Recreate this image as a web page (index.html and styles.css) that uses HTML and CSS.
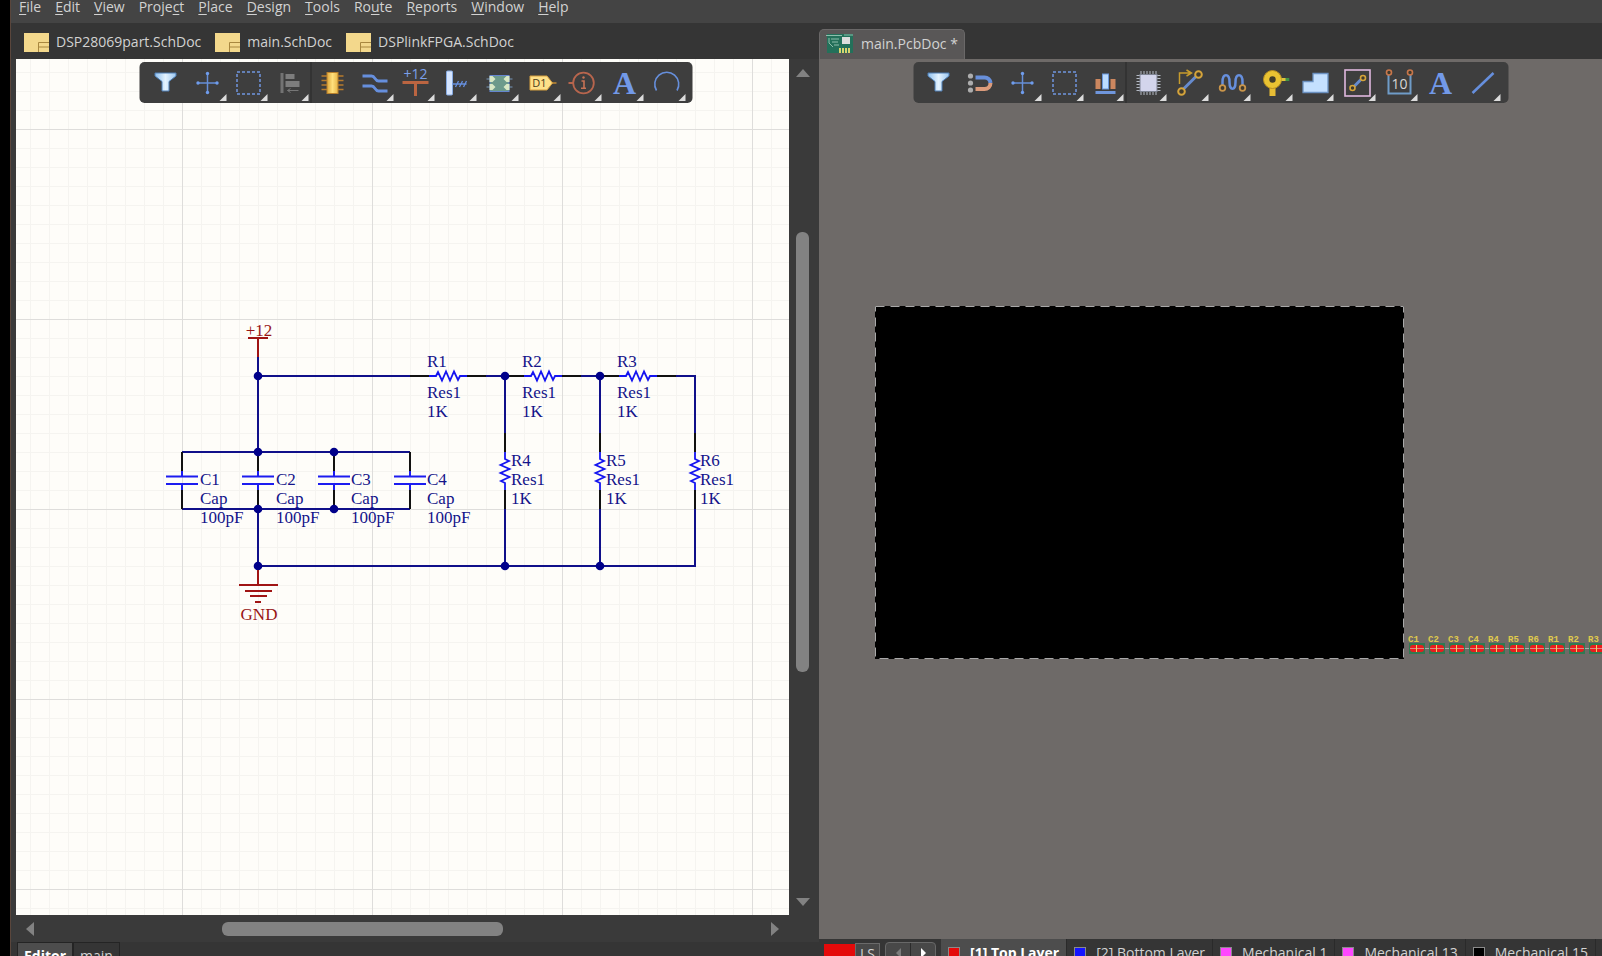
FILE: index.html
```html
<!DOCTYPE html>
<html lang="en">
<head>
<meta charset="utf-8">
<title>main.PcbDoc</title>
<link rel="stylesheet" href="styles.css">
</head>
<body>
<svg class="defs" aria-hidden="true">
  <defs>
    <linearGradient id="ice" x1="0" x2="1"><stop offset="0" stop-color="#8fc0ee"/><stop offset=".5" stop-color="#e4f3ff"/><stop offset="1" stop-color="#9cc6ee"/></linearGradient>
    <linearGradient id="gold" x1="0" x2="1"><stop offset="0" stop-color="#e0a93c"/><stop offset=".5" stop-color="#ffe07c"/><stop offset="1" stop-color="#e8b648"/></linearGradient>
    <symbol id="i-funnel" viewBox="0 0 32 32"><path d="M5.500 6h21v3l-7 5.500V24h-7v-9.500l-7-5.500z" fill="url(#ice)" stroke="#4f7fb5"/></symbol>
    <symbol id="i-move" viewBox="0 0 32 32"><path d="M16 6v20M6 16h20" stroke="#668fd8" stroke-width="1.500"/><g fill="#6f9cec"><circle cx="16" cy="6.500" r="1.700"/><circle cx="16" cy="25.500" r="1.700"/><circle cx="6.500" cy="16" r="1.700"/><circle cx="25.500" cy="16" r="1.700"/></g></symbol>
    <symbol id="i-select" viewBox="0 0 32 32"><rect x="4.500" y="5" width="23" height="22" fill="none" stroke="#7096e0" stroke-width="1.500" stroke-dasharray="3 2"/></symbol>
    <symbol id="i-align" viewBox="0 0 32 32"><path d="M6 6h3v20H6z" fill="#737373"/><path d="M11 7h9v5h-9zM11 14h14v6H11z" fill="#7d7d7d"/><path d="M24 23.500H13m3-2-3 2 3 2" stroke="#777" fill="none"/></symbol>
    <symbol id="i-part" viewBox="0 0 32 32"><path d="M5 9h22M5 13.500h22M5 18h22M5 22.500h22" stroke="#b77b2d" stroke-width="1.500"/><rect x="10.500" y="5.500" width="11" height="21" fill="url(#gold)" stroke="#b8802c"/></symbol>
    <symbol id="i-wire" viewBox="0 0 32 32"><path d="M4 9h9q2 0 3.500 2.500T20 14h9M4 19h9q2 0 3.500 2.500T20 24h9" fill="none" stroke="#668fdd" stroke-width="2.800"/></symbol>
    <symbol id="i-power" viewBox="0 0 32 32"><path d="M3 15.500h26M16 15.500V29" stroke="#bb6541" stroke-width="3"/><text x="16" y="12" text-anchor="middle" class="t-power">+12</text></symbol>
    <symbol id="i-bus" viewBox="0 0 32 32"><rect x="5" y="4" width="6" height="24" rx="1" fill="#d5e5ff" stroke="#86aae2"/><path d="M11 17h14M14 20l3-6M18 20l3-6M22 20l3-6" stroke="#668fdd" stroke-width="1.300"/></symbol>
    <symbol id="i-sheet" viewBox="0 0 32 32"><path d="M3 12h26M3 20h26" stroke="#7595b9"/><rect x="6.500" y="8.500" width="19" height="16" fill="#6d9a8b" stroke="#6586cf"/><path d="M6 9h3l3 3-3 3H6zM6 17h3l3 3-3 3H6zM26 9h-3l-3 3 3 3h3zM26 17h-3l-3 3 3 3h3z" fill="#d9e8c5"/></symbol>
    <symbol id="i-port" viewBox="0 0 32 32"><path d="M25 16h6" stroke="#c38a33" stroke-width="1.500"/><path d="M4.500 9h17l5.500 7-5.500 7h-17z" fill="#ffe089" stroke="#d59f3f"/><text x="14" y="20" text-anchor="middle" class="t-port">D1</text></symbol>
    <symbol id="i-info" viewBox="0 0 32 32"><path d="M1 16h5" stroke="#b7654d" stroke-width="2"/><circle cx="16" cy="16" r="10.300" fill="none" stroke="#b7654d" stroke-width="1.800"/><path d="M14 14h2.500v7M13.500 21.200h5" fill="none" stroke="#c87355" stroke-width="1.600"/><circle cx="16" cy="10.500" r="1.200" fill="#c87355"/></symbol>
    <symbol id="i-text" viewBox="0 0 32 32"><text x="16" y="27" text-anchor="middle" class="t-letter">A</text></symbol>
    <symbol id="i-arc" viewBox="0 0 32 32"><path d="M6 23.500A12 12 0 1 1 26.500 23.500" fill="none" stroke="#668fdc" stroke-width="1.600"/></symbol>
    <symbol id="i-magnet" viewBox="0 0 32 32"><g fill="#adadad"><circle cx="6" cy="9" r="2.600"/><circle cx="6" cy="16" r="2.600"/><circle cx="6" cy="23" r="2.600"/></g><path d="M11 10.500h9a6 6 0 0 1 6 5.500" fill="none" stroke="#688fda" stroke-width="4"/><path d="M11 22h9a6 6 0 0 0 6-6" fill="none" stroke="#db9b7b" stroke-width="4"/></symbol>
    <symbol id="i-stack" viewBox="0 0 32 32"><path d="M6 12h5v10H6zM21 12h5v10h-5z" fill="#cc875f"/><rect x="13" y="7" width="6" height="15" fill="#bcdcff" stroke="#6a97dc"/><path d="M6 24h20v3H6z" fill="#6f96dc"/></symbol>
    <symbol id="i-chip" viewBox="0 0 32 32"><path d="M9.500 4v24M12.500 4v24M15.500 4v24M18.500 4v24M21.500 4v24M24.500 4v24M5 8.500h24M5 11.500h24M5 14.500h24M5 17.500h24M5 20.500h24M5 23.500h24" stroke="#b4bac4"/><rect x="8.500" y="7.500" width="17" height="17" fill="#d3d5ec" stroke="#7e8493"/></symbol>
    <symbol id="i-route" viewBox="0 0 32 32"><path d="M8 24 24 8" stroke="#668bce" stroke-width="3"/><path d="M6 17V6h11m-4-3 5 3-5 3" fill="none" stroke="#c79c2d" stroke-width="1.500"/><g fill="#403a2c" stroke="#d5a43b" stroke-width="2"><circle cx="8" cy="24.500" r="3.300"/><circle cx="25" cy="7.500" r="3.300"/></g></symbol>
    <symbol id="i-wave" viewBox="0 0 32 32"><path d="M7 19v-4c0-9 7-9 7 0s6 9 6 0 7-9 7 0v4" fill="none" stroke="#668fdd" stroke-width="2.500"/><g fill="#403a2c" stroke="#c8944a" stroke-width="1.800"><circle cx="7" cy="21" r="2.800"/><circle cx="27" cy="21" r="2.800"/></g></symbol>
    <symbol id="i-via" viewBox="0 0 32 32"><path d="M22 12.500h10" stroke="#419247" stroke-width="3"/><path d="M12 20h6v9h-6z" fill="#e7bd35"/><circle cx="15" cy="12.500" r="9" fill="#eac332" stroke="#b99022"/><circle cx="15" cy="12.500" r="3.200" fill="#423d29"/><path d="M24 12.500h4" stroke="#e0c33a" stroke-width="3"/></symbol>
    <symbol id="i-poly" viewBox="0 0 32 32"><path d="M4.500 25.500v-11h10v-8h15v19z" fill="#c4e0ff" stroke="#6b91c1" stroke-width="1.300"/></symbol>
    <symbol id="i-room" viewBox="0 0 32 32"><rect x="4.500" y="3" width="25" height="26" fill="none" stroke="#e0b8df" stroke-width="1.600"/><path d="m12 21 10-10" stroke="#668bce" stroke-width="3"/><g fill="#403a2c" stroke="#d5a43b" stroke-width="1.600"><circle cx="12" cy="21" r="2.500"/><circle cx="22.500" cy="11" r="2.500"/></g></symbol>
    <symbol id="i-dim" viewBox="0 0 32 32"><path d="M6 8v18.500h22V8" fill="none" stroke="#6f9cc8" stroke-width="2"/><g fill="#403a2c" stroke="#c8764a" stroke-width="1.600"><circle cx="6.500" cy="5.500" r="2.500"/><circle cx="27.500" cy="5.500" r="2.500"/></g><text x="17" y="22" text-anchor="middle" class="t-dim">10</text></symbol>
    <symbol id="i-line" viewBox="0 0 32 32"><path d="M6 26 27 6" stroke="#668fdd" stroke-width="2.500"/></symbol>
    <symbol id="i-doc" viewBox="0 0 25 19"><path d="M0 0h25v19H0z" fill="#f3d88c"/><path d="M14.500 19V9.500H25M14.500 14H25" fill="none" stroke="#a8873f"/></symbol>
    <symbol id="i-pcb" viewBox="0 0 28 20"><path d="M1 0h26v19H1z" fill="#24705a"/><path d="M0 1.500h16M3 4v5l4 4M5 5h8M6 8h6M8 11h5M18 1h9" stroke="#8dbeac" fill="none"/><path d="M16 3h8v7h-8z" fill="#ddd"/><path d="M14 14v5M17 14v5M20 14v5M23 14v5" stroke="#d9d36f" stroke-width="2"/></symbol>
    <symbol id="zig" viewBox="0 0 38 14" overflow="visible"><path d="M0 7h7l2-4 4 8.500 4-9 4 9 4-9 4 8.500 2-4h7" fill="none" stroke="#1414f0" stroke-width="1.800"/></symbol>
  </defs>
</svg>

<div class="app">
  <nav class="menu" aria-label="Main menu">
    <button><u>F</u>ile</button><button><u>E</u>dit</button><button><u>V</u>iew</button><button>Proje<u>c</u>t</button><button><u>P</u>lace</button><button><u>D</u>esign</button><button><u>T</u>ools</button><button>Ro<u>u</u>te</button><button><u>R</u>eports</button><button><u>W</u>indow</button><button><u>H</u>elp</button>
  </nav>
  <main class="panes">
    <section class="pane sch" aria-label="Schematic">
      <div class="docs">
        <button class="doc"><svg class="doc-icon"><use href="#i-doc"/></svg>DSP28069part.SchDoc</button>
        <button class="doc"><svg class="doc-icon"><use href="#i-doc"/></svg>main.SchDoc</button>
        <button class="doc"><svg class="doc-icon"><use href="#i-doc"/></svg>DSPlinkFPGA.SchDoc</button>
      </div>
      <div class="work">
        <div class="sheet">
          <svg class="drawing" role="img" aria-label="Circuit schematic">
            <defs>
              <pattern id="minor" x="14" y="13" width="19" height="19" patternUnits="userSpaceOnUse"><path d="M.5 0v19M0 .5h19" stroke="#f5f4f0"/></pattern>
              <pattern id="major" x="166" y="70" width="190" height="190" patternUnits="userSpaceOnUse"><path d="M.5 0v190M0 .5h190" stroke="#dedddb"/></pattern>
            </defs>
            <rect width="100%" height="100%" fill="url(#minor)"/>
            <rect width="100%" height="100%" fill="url(#major)"/>
            <g class="wire">
              <path d="M242 298V507M242 317H679V507H242M166 393H394M166 450H394M489 317V507M584 317V507"/>
            </g>
            <g class="pin">
              <path d="M166 393v19M166 431v19M242 393v19M242 431v19M318 393v19M318 431v19M394 393v19M394 431v19"/>
              <path d="M394 317h19M451 317h19M489 317h19M546 317h19M584 317h19M641 317h19"/>
              <path d="M489 374v19M489 431v19M584 374v19M584 431v19M679 374v19M679 431v19"/>
            </g>
            <g class="erase"><path d="M413 317h38M508 317h38M603 317h38M489 393v38M584 393v38M679 393v38M242 418v7"/></g>
            <g class="cap">
              <path d="M150 417.500h32M150 425h32M166 412v5M166 425v6"/>
              <path d="M226 417.500h32M226 425h32M242 412v5M242 425v6"/>
              <path d="M302 417.500h32M302 425h32M318 412v5M318 425v6"/>
              <path d="M378 417.500h32M378 425h32M394 412v5M394 425v6"/>
            </g>
            <use href="#zig" x="413" y="310" width="38" height="14"/>
            <use href="#zig" x="508" y="310" width="38" height="14"/>
            <use href="#zig" x="603" y="310" width="38" height="14"/>
            <use href="#zig" width="38" height="14" transform="translate(496 393) rotate(90)"/>
            <use href="#zig" width="38" height="14" transform="translate(591 393) rotate(90)"/>
            <use href="#zig" width="38" height="14" transform="translate(686 393) rotate(90)"/>
            <g class="node"><circle cx="242" cy="317" r="4.300"/><circle cx="242" cy="393" r="4.300"/><circle cx="318" cy="393" r="4.300"/><circle cx="242" cy="450" r="4.300"/><circle cx="318" cy="450" r="4.300"/><circle cx="242" cy="507" r="4.300"/><circle cx="489" cy="317" r="4.300"/><circle cx="584" cy="317" r="4.300"/><circle cx="489" cy="507" r="4.300"/><circle cx="584" cy="507" r="4.300"/></g>
            <g class="rail"><path d="M232 279h20M242 279v19M242 511v15M223 526h39M229 532h27M234 537h17M239 543h6"/></g>
            <g class="rail-label"><text x="243" y="277">+12</text><text x="243" y="561">GND</text></g>
            <g class="label">
              <text x="411" y="308">R1</text><text x="411" y="339">Res1</text><text x="411" y="358">1K</text>
              <text x="506" y="308">R2</text><text x="506" y="339">Res1</text><text x="506" y="358">1K</text>
              <text x="601" y="308">R3</text><text x="601" y="339">Res1</text><text x="601" y="358">1K</text>
              <text x="495" y="407">R4</text><text x="495" y="426">Res1</text><text x="495" y="445">1K</text>
              <text x="590" y="407">R5</text><text x="590" y="426">Res1</text><text x="590" y="445">1K</text>
              <text x="684" y="407">R6</text><text x="684" y="426">Res1</text><text x="684" y="445">1K</text>
              <text x="184" y="426">C1</text><text x="184" y="445">Cap</text><text x="184" y="464">100pF</text>
              <text x="260" y="426">C2</text><text x="260" y="445">Cap</text><text x="260" y="464">100pF</text>
              <text x="335" y="426">C3</text><text x="335" y="445">Cap</text><text x="335" y="464">100pF</text>
              <text x="411" y="426">C4</text><text x="411" y="445">Cap</text><text x="411" y="464">100pF</text>
            </g>
          </svg>
        </div>
        <div class="vbar"><i class="arrow up"></i><div class="vtrack"><i class="vthumb"></i></div><i class="arrow down"></i></div>
        <div class="tools tools-sch" role="toolbar" aria-label="Schematic tools">
          <button aria-label="Filter"><svg><use href="#i-funnel"/></svg></button>
          <button class="more" aria-label="Move"><svg><use href="#i-move"/></svg></button>
          <button class="more" aria-label="Select"><svg><use href="#i-select"/></svg></button>
          <button class="more sep" aria-label="Align"><svg><use href="#i-align"/></svg></button>
          <button aria-label="Part"><svg><use href="#i-part"/></svg></button>
          <button class="more" aria-label="Wire"><svg><use href="#i-wire"/></svg></button>
          <button class="more" aria-label="Power port"><svg><use href="#i-power"/></svg></button>
          <button class="more" aria-label="Harness"><svg><use href="#i-bus"/></svg></button>
          <button class="more" aria-label="Sheet symbol"><svg><use href="#i-sheet"/></svg></button>
          <button class="more" aria-label="Port"><svg><use href="#i-port"/></svg></button>
          <button class="more" aria-label="Directive"><svg><use href="#i-info"/></svg></button>
          <button class="more" aria-label="Text"><svg><use href="#i-text"/></svg></button>
          <button class="more" aria-label="Arc"><svg><use href="#i-arc"/></svg></button>
        </div>
      </div>
      <div class="hbar"><i class="arrow left"></i><div class="htrack"><i class="hthumb"></i></div><i class="arrow right"></i></div>
      <div class="views"><button class="view on">Editor</button><button class="view">main</button></div>
    </section>
    <section class="pane pcb" aria-label="PCB">
      <div class="docs">
        <button class="doc on"><svg class="pcb-icon"><use href="#i-pcb"/></svg>main.PcbDoc *</button>
      </div>
      <div class="work board-area">
        <svg class="drawing" role="img" aria-label="Board layout">
          <defs>
            <g id="smd"><rect x="0" y="0" width="16" height="11" fill="#2f7a52"/><rect x="1" y="2" width="14" height="7" rx="3" fill="#ea1c1c"/><path d="M1 5.500h14" stroke="#d98b82"/><path d="M7.500 2v7" stroke="#f3d36a"/></g>
          </defs>
          <rect x="56" y="247" width="529" height="353"/>
          <rect x="56.500" y="247.500" width="528" height="352" class="outline"/>
          <path d="M592 589.500H783" stroke="#a3b3a7"/>
          <g><use href="#smd" x="590" y="584"/><use href="#smd" x="610" y="584"/><use href="#smd" x="630" y="584"/><use href="#smd" x="650" y="584"/><use href="#smd" x="670" y="584"/><use href="#smd" x="690" y="584"/><use href="#smd" x="710" y="584"/><use href="#smd" x="730" y="584"/><use href="#smd" x="750" y="584"/><use href="#smd" x="770" y="584"/></g>
          <g class="ref"><text x="589" y="583">C1</text><text x="609" y="583">C2</text><text x="629" y="583">C3</text><text x="649" y="583">C4</text><text x="669" y="583">R4</text><text x="689" y="583">R5</text><text x="709" y="583">R6</text><text x="729" y="583">R1</text><text x="749" y="583">R2</text><text x="769" y="583">R3</text></g>
        </svg>
        <div class="tools tools-pcb" role="toolbar" aria-label="PCB tools">
          <button aria-label="Filter"><svg><use href="#i-funnel"/></svg></button>
          <button aria-label="Snap"><svg><use href="#i-magnet"/></svg></button>
          <button class="more" aria-label="Move"><svg><use href="#i-move"/></svg></button>
          <button class="more" aria-label="Select"><svg><use href="#i-select"/></svg></button>
          <button class="more sep" aria-label="Align"><svg><use href="#i-stack"/></svg></button>
          <button class="more" aria-label="Component"><svg><use href="#i-chip"/></svg></button>
          <button class="more" aria-label="Route"><svg><use href="#i-route"/></svg></button>
          <button class="more" aria-label="Tune length"><svg><use href="#i-wave"/></svg></button>
          <button class="more" aria-label="Via"><svg><use href="#i-via"/></svg></button>
          <button class="more" aria-label="Polygon"><svg><use href="#i-poly"/></svg></button>
          <button class="more" aria-label="Room"><svg><use href="#i-room"/></svg></button>
          <button class="more" aria-label="Dimension"><svg><use href="#i-dim"/></svg></button>
          <button aria-label="Text"><svg><use href="#i-text"/></svg></button>
          <button class="more" aria-label="Line"><svg><use href="#i-line"/></svg></button>
        </div>
      </div>
      <div class="layers">
        <i class="current"></i><button class="ls">LS</button>
        <div class="steps"><button aria-label="Previous layer"><i class="tip prev"></i></button><button aria-label="Next layer"><i class="tip next"></i></button></div>
        <button class="layer on"><i class="chip red"></i>[1] Top Layer</button>
        <button class="layer"><i class="chip blue"></i>[2] Bottom Layer</button>
        <button class="layer"><i class="chip pink"></i>Mechanical 1</button>
        <button class="layer"><i class="chip pink"></i>Mechanical 13</button>
        <button class="layer"><i class="chip black"></i>Mechanical 15</button>
      </div>
    </section>
  </main>
</div>
</body>
</html>
```
FILE: styles.css
```css
* { box-sizing: border-box; }
body { margin: 0; background: #000; color: #d2d2d2; font: 14px/20px "Open Sans", "Noto Sans", sans-serif; overflow: hidden; }
button { margin: 0; padding: 0; border: 0; background: none; color: inherit; font: inherit; white-space: nowrap; }
.defs { position: absolute; width: 0; height: 0; }
.app { height: 100vh; margin-left: 10px; border-left: 1px solid #5a463c; background: #3a3a3a; display: flex; flex-direction: column; }

.menu { flex: none; height: 23px; padding-left: 8px; display: flex; gap: 14px; align-items: flex-end; padding-bottom: 6px; background: #444; }
.menu u { text-underline-offset: 2px; text-decoration-thickness: 1px; }

.panes { flex: 1; min-height: 0; display: grid; grid-template-columns: 808px minmax(0, 1fr); }
.pane { min-width: 0; min-height: 0; display: flex; flex-direction: column; }
.docs { flex: none; height: 36px; display: flex; background: #353535; }
.sch .docs { padding: 2px 0 0 13px; gap: 14px; }
.pcb .docs { padding-top: 6px; }
.doc { display: flex; align-items: center; gap: 7px; }
.doc.on { padding: 0 6px 2px; background: #595757; border: 1px solid #6a6868; border-bottom: 0; border-radius: 5px 5px 0 0; }
.doc-icon { width: 25px; height: 19px; }
.pcb-icon { width: 28px; height: 20px; }

.work { position: relative; flex: 1; min-height: 0; display: flex; }
.sch .work { margin: 0 3px 0 5px; }
.sheet { flex: 1; min-width: 0; background: #fefdf9; }
.drawing { display: block; width: 100%; height: 100%; }
.board-area { background: #6e6a68; }

.vbar { width: 27px; flex: none; display: flex; flex-direction: column; align-items: center; padding: 10px 0 9px; }
.vtrack { flex: 1; width: 13px; display: flex; flex-direction: column; padding-top: 155px; }
.vthumb { height: 66%; border-radius: 6px; background: #828282; }
.hbar { flex: none; height: 27px; margin: 0 30px 0 5px; padding: 0 10px; display: flex; align-items: center; }
.htrack { flex: 1; padding-left: 188px; }
.hthumb { display: block; width: 281px; height: 14px; border-radius: 6px; background: #828282; }
.arrow { flex: none; border: 7px solid transparent; }
.up { border-top: 0; border-bottom: 8px solid #828282; }
.down { border-bottom: 0; border-top: 8px solid #828282; }
.left { border-left: 0; border-right: 8px solid #828282; }
.right { border-right: 0; border-left: 8px solid #828282; }

.views { flex: none; height: 14px; padding-left: 6px; display: flex; overflow: hidden; background: #353535; }
.view { display: flex; align-items: flex-start; height: 26px; padding: 3px 6px 0; border: 1px solid #242424; }
.view.on { background: #4d4d4d; color: #fff; font-weight: 700; }

.tools { position: absolute; top: 3px; left: 50%; transform: translateX(-50%); height: 41px; padding: 0 5px; border-radius: 5px; background: #3e3e3e; display: grid; grid-auto-flow: column; grid-auto-columns: 1fr; }
.tools-sch { width: 553px; }
.tools-pcb { width: 595px; }
.tools button { position: relative; display: grid; place-items: center; }
.tools svg { width: 32px; height: 32px; }
.more::after { content: ""; position: absolute; right: 2px; bottom: 2px; border-left: 7px solid transparent; border-bottom: 7px solid #dcdcdc; }
.sep { border-right: 1px solid #292929; }
.t-power { font: 14px "Open Sans", sans-serif; fill: #7ba0ea; }
.t-port { font: 11px "Open Sans", sans-serif; fill: #4a3b18; }
.t-letter { font: bold 32px "Liberation Serif", serif; fill: #7299e8; }
.t-dim { font: 14px "Open Sans", sans-serif; fill: #d7d7d7; }

.wire path { fill: none; stroke: #10108a; stroke-width: 2; }
.pin path { fill: none; stroke: #111; stroke-width: 2; }
.erase path { stroke: #fefdf9; stroke-width: 3; }
.cap path { fill: none; stroke: #1c1cf0; stroke-width: 2; }
.node { fill: #00008a; }
.rail path { fill: none; stroke: #a01414; stroke-width: 2; }
.label, .rail-label { font: 17px "Liberation Serif", serif; fill: #14148a; }
.rail-label { fill: #981616; text-anchor: middle; }

.outline { fill: none; stroke: #a8a8a8; stroke-dasharray: 9 6; }
.ref { font: bold 9px "Liberation Mono", monospace; fill: #e0cb4c; }

.layers { flex: none; height: 17px; padding-left: 5px; display: flex; overflow: hidden; background: #353535; }
.layers > * { flex: none; height: 34px; }
.current { width: 31px; margin-top: 5px; background: #e40a0a; }
.ls { display: flex; justify-content: center; align-items: flex-start; width: 25px; margin-top: 4px; border: 1px solid #6a6a6a; background: #484848; }
.steps { display: flex; width: 51px; margin: 3px 5px 0; border: 1px solid #686868; border-radius: 4px; background: #484848; }
.steps button { flex: 1; display: flex; justify-content: center; align-items: flex-start; padding-top: 5px; }
.steps button + button { border-left: 1px solid #2b2b2b; }
.tip { border: 5px solid transparent; }
.prev { border-left: 0; border-right-color: #7c7c7c; }
.next { border-right: 0; border-left-color: #fff; }
.layer { display: flex; align-items: flex-start; gap: 10px; padding: 4px 7px 0; border-right: 1px solid #2a2a2a; }
.layer.on { background: #4d4d4d; color: #fff; font-weight: 700; }
.chip { width: 12px; height: 13px; margin-top: 4px; border: 1px solid #8a8a8a; }
.red { background: #e40a0a; }
.blue { background: #1414ff; }
.pink { background: #ff48ff; }
.black { background: #000; }
```
